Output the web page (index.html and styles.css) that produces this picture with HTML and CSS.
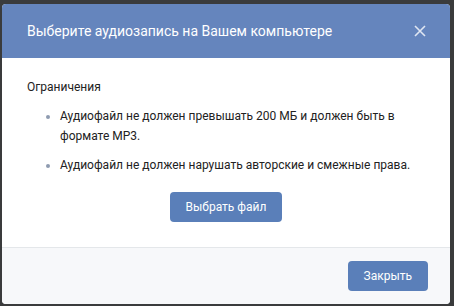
FILE: index.html
```html
<!DOCTYPE html>
<html lang="ru">
  <head>
    <meta charset="utf-8" />
    <title>Выберите аудиозапись</title>
    <link rel="stylesheet" href="styles.css">
  </head>
  <body>
    <div class="box">
      <div class="box-head">
        <div class="box-title">Выберите аудиозапись на Вашем компьютере</div>
        <div class="box-close">
          <svg width="12" height="12" viewBox="0 0 12 12">
            <path d="M1 1L11 11M11 1L1 11" stroke="#dfe6f2" stroke-width="1.6" fill="none" />
          </svg>
        </div>
      </div>

      <div class="box-body">
        <div class="limits-title">Ограничения</div>
        <ul class="limits">
          <li>Аудиофайл не должен превышать 200 МБ и должен быть в формате MP3.</li>
          <li>Аудиофайл не должен нарушать авторские и смежные права.</li>
        </ul>
        <div class="choose">
          <button class="btn">Выбрать файл</button>
        </div>
      </div>

      <div class="box-foot">
        <button class="btn">Закрыть</button>
      </div>
    </div>
  </body>
</html>
```

FILE: styles.css
```css
html,
body {
  margin: 0;
  background: #3a3b3c;
  font-family: Roboto, "Liberation Sans", sans-serif;
}

.box {
  width: 448px;
  height: 300px;
  margin: 4px 0 0 2px;
  background: #fff;
  border-radius: 4px;
  overflow: hidden;
  display: flex;
  flex-direction: column;
}

.box-head {
  height: 54px;
  flex: none;
  background: #6585bd;
  display: flex;
  align-items: center;
  justify-content: space-between;
  padding: 0 24px 0 25px;
}

.box-title {
  color: #fff;
  font-size: 14px;
}

.box-close {
  width: 12px;
  height: 12px;
  display: flex;
}

.box-body {
  flex: 1;
  padding: 20px 25px 0 25px;
  color: #222;
  font-size: 12px;
}

.limits-title {
  line-height: 18px;
}

.limits {
  margin: 10px 0 0 0;
  padding: 0 0 0 33px;
  line-height: 20px;
}

.limits li {
  margin-bottom: 9px;
}

.limits li::marker {
  color: #8e9bb0;
}

.choose {
  text-align: center;
  padding-top: 8px;
}

.btn {
  background: #5a7fb9;
  color: #fff;
  border: none;
  border-radius: 4px;
  font-family: inherit;
  font-size: 12px;
  height: 30px;
  padding: 0 16px;
}

.box-foot {
  height: 56px;
  flex: none;
  background: #f7f8fa;
  border-top: 1px solid #e4e7ea;
  display: flex;
  align-items: center;
  justify-content: flex-end;
  padding: 0 22px;
}
```
